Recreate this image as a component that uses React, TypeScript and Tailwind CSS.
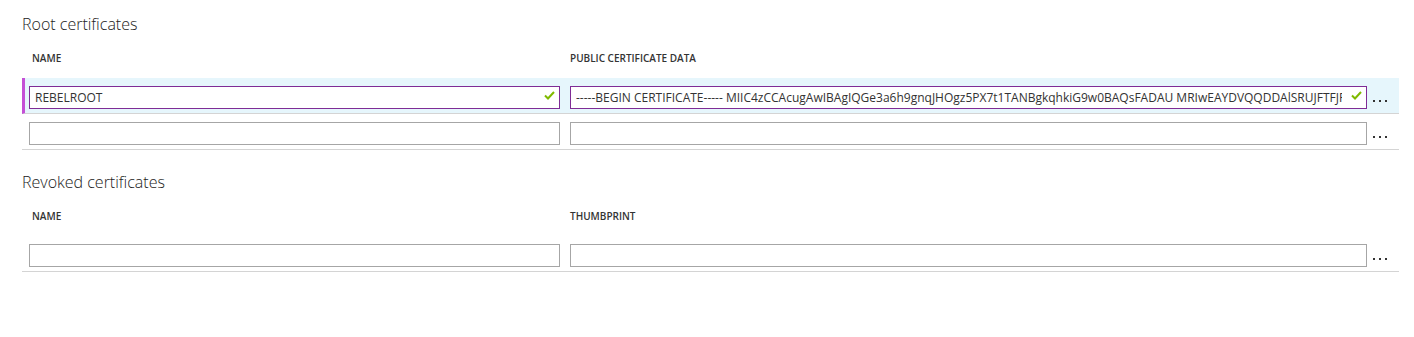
import React from "react";

type Row = {
  name: string;
  value: string;
  selected?: boolean;
};

const certText =
  "-----BEGIN CERTIFICATE----- MIIC4zCCAcugAwIBAgIQGe3a6h9gnqJHOgz5PX7t1TANBgkqhkiG9w0BAQsFADAU MRIwEAYDVQQDDAlSRUJFTFJPT1QwHhcNMTgwMTE1MjIxMjA1WhcNMTkwMTE1MjIzMjA1WjAUMRIw";

const rootRows: Row[] = [
  { name: "REBELROOT", value: certText, selected: true },
  { name: "", value: "" },
];

const revokedRows: Row[] = [{ name: "", value: "" }];

function Check() {
  return (
    <svg
      width="11"
      height="9"
      viewBox="0 0 11 9"
      className="absolute right-[5px] top-[7px]"
    >
      <polyline
        points="1,4.5 4,7.5 10,1"
        fill="none"
        stroke="#7fba00"
        strokeWidth="2"
      />
    </svg>
  );
}

function Dots() {
  return (
    <div className="flex h-[23px] flex-1 items-end gap-[4px] pb-[5px] pl-[6px]">
      <span className="h-[2px] w-[2px] bg-[#333]" />
      <span className="h-[2px] w-[2px] bg-[#333]" />
      <span className="h-[2px] w-[2px] bg-[#333]" />
    </div>
  );
}

function Field({ value, width, selected }: { value: string; width: string; selected?: boolean }) {
  return (
    <div className={`relative h-[23px] ${width}`}>
      <input
        readOnly
        value={value}
        className={`h-[23px] w-full border bg-white pl-[5px] pr-[24px] text-[12px] text-[#333] outline-none ${
          selected ? "border-[#7f2c96]" : "border-[#a6a6a6]"
        }`}
      />
      {selected ? <Check /> : null}
    </div>
  );
}

function Section({
  title,
  second,
  rows,
  className,
}: {
  title: string;
  second: string;
  rows: Row[];
  className?: string;
}) {
  return (
    <section className={className}>
      <h2 className="h-[20px] text-[16px] font-light leading-[20px] text-[#222]">
        {title}
      </h2>
      <div className="mt-[16px] flex h-[16px] text-[10px] font-semibold leading-[16px] text-[#333]">
        <span className="ml-[10px] w-[538px]">NAME</span>
        <span>{second}</span>
      </div>
      <div className="mt-[12px]">
        {rows.map((row, i) => (
          <div
            key={i}
            className={`flex h-[36px] border-b border-[#d4d4d4] pt-[6px] ${
              row.selected
                ? "border-l-[3px] border-l-[#c450d6] bg-[#e6f6fc] pl-[4px]"
                : "pl-[7px]"
            }`}
          >
            <Field value={row.name} width="w-[531px]" selected={row.selected} />
            <div className="w-[10px]" />
            <Field value={row.value} width="w-[797px]" selected={row.selected} />
            <Dots />
          </div>
        ))}
      </div>
    </section>
  );
}

export default function App() {
  return (
    <div
      className="h-[337px] w-[1414px] bg-white pl-[22px] pt-[14px] pr-[15px]"
      style={{ fontFamily: '"Open Sans", "Noto Sans", sans-serif' }}
    >
      <Section title="Root certificates" second="PUBLIC CERTIFICATE DATA" rows={rootRows} />
      <Section
        title="Revoked certificates"
        second="THUMBPRINT"
        rows={revokedRows}
        className="mt-[22px]"
      />
    </div>
  );
}
